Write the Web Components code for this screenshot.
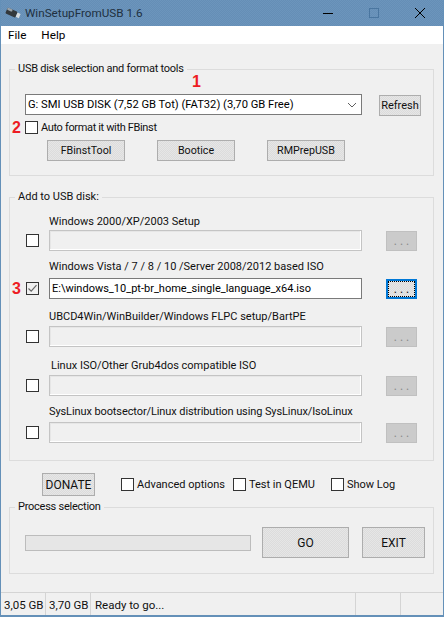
<!DOCTYPE html>
<html>
<head>
<meta charset="utf-8">
<title>WinSetupFromUSB 1.6</title>
<style>
	html, body { margin: 0; padding: 0; background: #f0f0f0; }
	body { font: 11px Roboto, "Noto Sans", sans-serif; color: #111; }
</style>
</head>
<body>
<winsetup-app></winsetup-app>
<script>
const FONT = `Roboto, "Noto Sans", sans-serif`;

class WinTitlebar extends HTMLElement {
	connectedCallback() {
		this.attachShadow({ mode: "open" }).innerHTML = `
			<style>
				:host { display: flex; align-items: center; height: 26px; padding: 0 0 0 4px; color: #20303f;
					background: repeating-conic-gradient(#6c95bc 0 25%, #658eb6 0 50%) 0 0 / 2px 2px; }
				.icon { width: 16px; height: 14px; margin-right: 4px; }
				.title { font-size: 11.7px; flex: 1; white-space: nowrap; }
				.ctl { display: flex; width: 46px; height: 26px; justify-content: center; align-items: center; }
			</style>
			<svg class="icon" viewBox="0 0 16 14">
				<g transform="rotate(24 8 7)">
					<rect x="1" y="4" width="11" height="6.5" rx="1.2" fill="#33383c"/>
					<rect x="1" y="4" width="5.5" height="2.4" rx="1" fill="#9aa3aa"/>
					<rect x="12" y="4.8" width="3.4" height="4.6" fill="#d6dbdf"/>
				</g>
			</svg>
			<span class="title"><slot></slot></span>
			<span class="ctl"><svg width="12" height="12"><path d="M1 6.5H11" stroke="#000"/></svg></span>
			<span class="ctl"><svg width="12" height="12"><rect x="1.5" y="1.5" width="9" height="9" fill="none" stroke="#4a76a0"/></svg></span>
			<span class="ctl"><svg width="12" height="12"><path d="M1 1L11 11M11 1L1 11" stroke="#000"/></svg></span>
		`;
	}
}

class WinMenubar extends HTMLElement {
	connectedCallback() {
		this.attachShadow({ mode: "open" }).innerHTML = `
			<style>
				:host { display: flex; gap: 15px; height: 18px; align-items: center; padding-left: 7px; background: #fff; color: #000; font-size: 11.7px; }
			</style>
			<slot></slot>
		`;
	}
}

class WinGroup extends HTMLElement {
	connectedCallback() {
		this.attachShadow({ mode: "open" }).innerHTML = `
			<style>
				:host { display: block; }
				fieldset { margin: 0; padding: 0; border: 1px solid #dcdcdc; height: 100%; box-sizing: border-box; min-width: 0; }
				legend { margin-left: 5px; padding: 0 3px; font: 11px/16px ${FONT}; letter-spacing: var(--legend-track, 0); color: #111; }
				.inner { padding: var(--group-padding, 0); }
			</style>
			<fieldset>
				<legend>${this.getAttribute("label")}</legend>
				<div class="inner"><slot></slot></div>
			</fieldset>
		`;
	}
}

class WinButton extends HTMLElement {
	connectedCallback() {
		const state = this.hasAttribute("focused") ? "focused" : this.hasAttribute("disabled") ? "disabled" : "";
		this.attachShadow({ mode: "open" }).innerHTML = `
			<style>
				:host { display: block; box-sizing: border-box; }
				.btn { display: flex; align-items: center; justify-content: center; width: 100%; height: 100%; box-sizing: border-box;
					border: 1px solid #adadad; color: #111; white-space: nowrap;
					background: repeating-conic-gradient(#e6e6e6 0 25%, #dcdcdc 0 50%) 0 0 / 2px 2px; }
				.disabled { background: #cbcbcb; border-color: #c0c0c0; color: #8a8a8a; }
				.focused { border: 2px solid #0078d7; outline: 1px dotted #000; outline-offset: -3px; }
			</style>
			<div class="btn ${state}"><slot></slot></div>
		`;
	}
}

class WinCheck extends HTMLElement {
	connectedCallback() {
		const on = this.hasAttribute("checked");
		this.attachShadow({ mode: "open" }).innerHTML = `
			<style>
				:host { display: inline-flex; align-items: center; gap: 3px; white-space: nowrap; color: #111; }
				.box { width: 13px; height: 13px; box-sizing: border-box; border: 1px solid #333; background: #fff; flex: none; display: block; }
				.box.on { background: #f0f0f0; }
			</style>
			<svg class="box ${on ? "on" : ""}" viewBox="0 0 11 11">
				${on ? `<path d="M1.5 5.5L4.2 8.2L9.5 2.2" fill="none" stroke="#666" stroke-width="1.2"/>` : ""}
			</svg>
			<slot></slot>
		`;
	}
}

class WinField extends HTMLElement {
	connectedCallback() {
		const value = this.getAttribute("value") || "";
		this.attachShadow({ mode: "open" }).innerHTML = `
			<style>
				:host { display: flex; align-items: center; box-sizing: border-box; height: 21px; padding-left: 2px;
					border: 1px solid #7a7a7a; background: #fff; color: #000; white-space: nowrap; overflow: hidden; }
				:host([disabled]) { border: 1px solid #c4c4c4; background: #f0f0f0; box-shadow: inset -1px -1px 0 #fff, inset 1px 1px 0 #e6e6e6; }
			</style>
			${value}
		`;
	}
}

class WinSelect extends HTMLElement {
	connectedCallback() {
		this.attachShadow({ mode: "open" }).innerHTML = `
			<style>
				:host { display: flex; align-items: center; box-sizing: border-box; height: 21px; padding: 0 4px 0 2px;
					border: 1px solid #7a7a7a; background: #fff; color: #000; font-size: 11.2px; white-space: nowrap; }
				.text { flex: 1; }
				svg { display: block; }
			</style>
			<span class="text"><slot></slot></span>
			<svg width="10" height="6"><path d="M1 1L5 5L9 1" fill="none" stroke="#606060"/></svg>
		`;
	}
}

class WinSourceRow extends HTMLElement {
	connectedCallback() {
		const label = this.getAttribute("label");
		const value = this.getAttribute("value") || "";
		const active = this.hasAttribute("active");
		this.attachShadow({ mode: "open" }).innerHTML = `
			<style>
				:host { display: grid; grid-template-columns: 23px 313px 24px 31px; grid-template-rows: 1fr 21px; align-items: center; color: #111; }
				.label { grid-column: 2 / 5; align-self: end; line-height: 16px; white-space: nowrap; letter-spacing: var(--label-track, 0);
					padding-left: var(--label-indent, 0); margin-bottom: var(--label-lift, 0); }
				win-check { grid-row: 2; grid-column: 1; }
				win-field { grid-row: 2; grid-column: 2; }
				win-button { grid-row: 2; grid-column: 4; height: 20px; font-size: 12px; }
			</style>
			<span class="label">${label}</span>
			<win-check ${active ? "checked" : ""}></win-check>
			<win-field value="${value}" ${active ? "" : "disabled"}></win-field>
			<win-button ${active ? "focused" : "disabled"}>. . .</win-button>
		`;
	}
}

class WinStatusbar extends HTMLElement {
	connectedCallback() {
		this.attachShadow({ mode: "open" }).innerHTML = `
			<style>
				:host { display: grid; grid-template-columns: 45px 45px 265px 45px 1fr; height: 22px; align-items: center;
					border-top: 1px solid #d4d4d4; color: #111; font-size: 11.5px; }
				::slotted(*) { display: block; box-sizing: border-box; height: 100%; line-height: 24px; padding-left: 3px; border-right: 1px solid #d4d4d4; white-space: nowrap; }
				::slotted(:nth-child(3)) { padding-left: 4px; }
				::slotted(:last-child) { border-right: 0; }
			</style>
			<slot></slot>
		`;
	}
}

class WinMark extends HTMLElement {
	connectedCallback() {
		this.attachShadow({ mode: "open" }).innerHTML = `
			<style>
				:host { position: absolute; font: bold 16px/16px "Liberation Sans", sans-serif; color: #ed1c24; }
			</style>
			<slot></slot>
		`;
	}
}

class WinSetupApp extends HTMLElement {
	connectedCallback() {
		this.attachShadow({ mode: "open" }).innerHTML = `
			<style>
				:host { display: flex; flex-direction: column; position: relative; box-sizing: border-box; width: 444px; height: 617px;
					border: 1px solid #6490b8; border-top: 0; border-bottom-width: 2px; background: #f0f0f0; overflow: hidden; }
				.content { flex: 1; padding: 17px 10px 0 8px; display: flex; flex-direction: column; }
				win-group { width: 425px; }
				.usb { height: 115px; --group-padding: 17px 0 0 15px; --legend-track: -.25px; }
				.usb-top { display: flex; gap: 17px; align-items: flex-start; }
				.usb-top win-select { width: 337px; }
				.usb-top win-button { width: 42px; height: 21px; margin-top: 1px; }
				.usb > win-check { display: flex; margin-top: 5px; letter-spacing: -.35px; }
				.tools { display: flex; gap: 32px; margin: 6px 0 0 22px; font-size: 10.7px; }
				.tools win-button { width: 78px; height: 21px; }
				.add { height: 272px; margin-top: 13px; --group-padding: 0 0 0 16px; }
				.add win-source-row:nth-of-type(1) { height: 46px; }
				.add win-source-row:nth-of-type(2) { height: 48px; --label-lift: 3px; }
				.add win-source-row:nth-of-type(3) { height: 48px; --label-lift: 1px; }
				.add win-source-row:nth-of-type(4) { height: 49px; --label-lift: 1px; --label-indent: 2px; }
				.add win-source-row:nth-of-type(5) { height: 47px; --label-lift: 2px; --label-track: -.1px; }
				.options { display: flex; align-items: center; height: 23px; margin-top: 12px; padding-left: 33px; }
				.options win-button { width: 53px; height: 23px; margin-right: 26px; font-size: 12px; }
				.options win-check:nth-of-type(1) { width: 112px; }
				.options win-check:nth-of-type(2) { width: 98px; }
				.process { height: 75px; margin-top: 3px; --group-padding: 12px 0 0 15px; --legend-track: -.25px; }
				.process-row { display: flex; align-items: center; }
				.bar { width: 226px; height: 16px; box-sizing: border-box; border: 1px solid #bcbcbc; background: #e6e6e6; margin-right: 11px; }
				.go { width: 87px; height: 31px; margin-right: 13px; font-size: 12px; }
				.exit { width: 63px; height: 31px; font-size: 12px; }
				.one { left: 191px; top: 74px; }
				.two { left: 11px; top: 120px; }
				.three { left: 11px; top: 281px; }
			</style>
			<win-titlebar>WinSetupFromUSB 1.6</win-titlebar>
			<win-menubar><span>File</span><span>Help</span></win-menubar>
			<div class="content">
				<win-group class="usb" label="USB disk selection and format tools">
					<div class="usb-top">
						<win-select>G: SMI USB DISK (7,52 GB Tot) (FAT32) (3,70 GB Free)</win-select>
						<win-button>Refresh</win-button>
					</div>
					<win-check>Auto format it with FBinst</win-check>
					<div class="tools">
						<win-button>FBinstTool</win-button>
						<win-button>Bootice</win-button>
						<win-button>RMPrepUSB</win-button>
					</div>
				</win-group>
				<win-group class="add" label="Add to USB disk:">
					<win-source-row label="Windows 2000/XP/2003 Setup"></win-source-row>
					<win-source-row label="Windows Vista / 7 / 8 / 10 /Server 2008/2012 based ISO" value="E:\\windows_10_pt-br_home_single_language_x64.iso" active></win-source-row>
					<win-source-row label="UBCD4Win/WinBuilder/Windows FLPC setup/BartPE"></win-source-row>
					<win-source-row label="Linux ISO/Other Grub4dos compatible ISO"></win-source-row>
					<win-source-row label="SysLinux bootsector/Linux distribution using SysLinux/IsoLinux"></win-source-row>
				</win-group>
				<div class="options">
					<win-button>DONATE</win-button>
					<win-check>Advanced options</win-check>
					<win-check>Test in QEMU</win-check>
					<win-check>Show Log</win-check>
				</div>
				<win-group class="process" label="Process selection">
					<div class="process-row">
						<div class="bar"></div>
						<win-button class="go">GO</win-button>
						<win-button class="exit">EXIT</win-button>
					</div>
				</win-group>
			</div>
			<win-statusbar>
				<span>3,05 GB</span><span>3,70 GB</span><span>Ready to go...</span><span></span><span></span>
			</win-statusbar>
			<win-mark class="one">1</win-mark>
			<win-mark class="two">2</win-mark>
			<win-mark class="three">3</win-mark>
		`;
	}
}

window.customElements.define("win-titlebar", WinTitlebar);
window.customElements.define("win-menubar", WinMenubar);
window.customElements.define("win-group", WinGroup);
window.customElements.define("win-button", WinButton);
window.customElements.define("win-check", WinCheck);
window.customElements.define("win-field", WinField);
window.customElements.define("win-select", WinSelect);
window.customElements.define("win-source-row", WinSourceRow);
window.customElements.define("win-statusbar", WinStatusbar);
window.customElements.define("win-mark", WinMark);
window.customElements.define("winsetup-app", WinSetupApp);
</script>
</body>
</html>
